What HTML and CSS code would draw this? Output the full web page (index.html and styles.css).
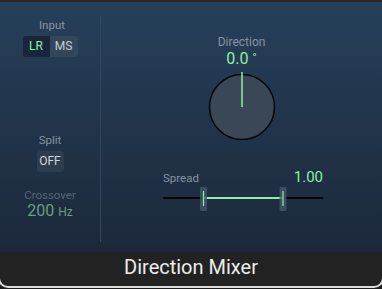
FILE: index.html
```html
<!DOCTYPE html>
<html lang="en">
<head>
    <meta charset="UTF-8">
    <title>Direction Mixer</title>
    <link rel="stylesheet" href="styles.css">
</head>
<body>

<div class="plugin">
    <div class="topbar"></div>
    <div class="panel">
        <div class="side">
            <div class="label">Input</div>
            <div class="toggle">
                <span class="seg seg-on">LR</span>
                <span class="seg">MS</span>
            </div>

            <div class="label split-label">Split</div>
            <div class="btn">OFF</div>

            <div class="label dim cross-label">Crossover</div>
            <div class="freq">200 <span class="unit">Hz</span></div>
        </div>

        <div class="main">
            <div class="label dir-label">Direction</div>
            <div class="value">0.0 <span class="deg">°</span></div>
            <svg class="knob" width="70" height="70" viewBox="0 0 70 70">
                <circle cx="35" cy="37" r="32.5" fill="#3a4757" stroke="#050608" stroke-width="1.5"/>
                <line x1="35" y1="2" x2="35" y2="37" stroke="#8cf0a0" stroke-width="1.5"/>
            </svg>

            <div class="spread">
                <div class="spread-head">
                    <span class="label">Spread</span>
                    <span class="value">1.00</span>
                </div>
                <svg class="slider" width="160" height="24" viewBox="0 0 160 24">
                    <line x1="0" y1="11" x2="160" y2="11" stroke="#050608" stroke-width="2"/>
                    <line x1="40" y1="11" x2="120" y2="11" stroke="#8cf0a0" stroke-width="2"/>
                    <rect x="37" y="0" width="7" height="24" rx="1" fill="#44566a" opacity="0.8"/>
                    <rect x="116.5" y="0" width="7" height="24" rx="1" fill="#44566a" opacity="0.8"/>
                    <line x1="40.5" y1="4" x2="40.5" y2="19" stroke="#8cf0a0" stroke-width="1.2"/>
                    <line x1="120" y1="4" x2="120" y2="19" stroke="#8cf0a0" stroke-width="1.2"/>
                </svg>
            </div>
        </div>
    </div>
    <div class="footer">Direction Mixer</div>
</div>

</body>
</html>
```

FILE: styles.css
```css
body {
    margin: 0;
    background-color: #1d1d1d;
    font-family: Roboto, "Liberation Sans", sans-serif;
    overflow: hidden;
}
.plugin {
    width: 382px;
    height: 289px;
    display: flex;
    flex-direction: column;
}
.topbar {
    height: 2px;
    background-color: #2b2623;
}
.panel {
    height: 250px;
    display: flex;
    background: linear-gradient(#26405a, #1c283a);
}
.side {
    width: 100px;
    margin: 13px 0 10px;
    border-right: 1px solid #2f4660;
    display: flex;
    flex-direction: column;
    align-items: center;
}
.label {
    font-size: 11.5px;
    line-height: 13px;
    color: #8593a3;
}
.side .label:first-child {
    margin-top: 4px;
    margin-left: 4px;
}
.toggle {
    display: flex;
    margin-top: 4px;
}
.seg {
    width: 27px;
    height: 21px;
    line-height: 21px;
    text-align: center;
    font-size: 12px;
    color: #c5ccd4;
    background-color: #34465a;
}
.seg-on {
    color: #8cf0a0;
    background-color: #18263a;
    border-radius: 3px 0 0 3px;
}
.seg:last-child {
    width: 28px;
    border-radius: 0 3px 3px 0;
}
.split-label {
    margin-top: 77px;
}
.btn {
    margin-top: 4px;
    width: 27px;
    height: 21px;
    line-height: 21px;
    text-align: center;
    font-size: 12px;
    color: #d0d6dc;
    background-color: #2d3c4e;
    border-radius: 3px;
}
.dim {
    color: #536578;
}
.cross-label {
    margin-top: 17px;
}
.freq {
    font-size: 16px;
    line-height: 18px;
    color: #6a9e80;
}
.unit {
    font-size: 12px;
}
.main {
    flex: 1;
    display: flex;
    flex-direction: column;
    align-items: center;
    padding-top: 33px;
}
.dir-label {
    font-size: 12px;
    line-height: 14px;
}
.value {
    font-size: 16px;
    line-height: 17px;
    color: #8cf0a0;
}
.deg {
    font-size: 11px;
    vertical-align: 3px;
}
.knob {
    display: block;
    margin-top: 3px;
}
.spread {
    width: 160px;
    margin-top: 29px;
    margin-left: 3px;
}
.spread-head {
    display: flex;
    justify-content: space-between;
    align-items: baseline;
}
.spread-head .value {
    font-size: 15px;
}
.slider {
    display: block;
    margin-top: 1px;
}
.footer {
    height: 34px;
    margin: 0 -2px;
    background-color: #222222;
    border-bottom: 2px solid #dcdcdc;
    border-left: 2px solid #dcdcdc;
    border-right: 2px solid #dcdcdc;
    border-radius: 0 0 10px 10px;
    text-align: center;
    font-size: 20px;
    line-height: 31px;
    color: #ececec;
}
```
